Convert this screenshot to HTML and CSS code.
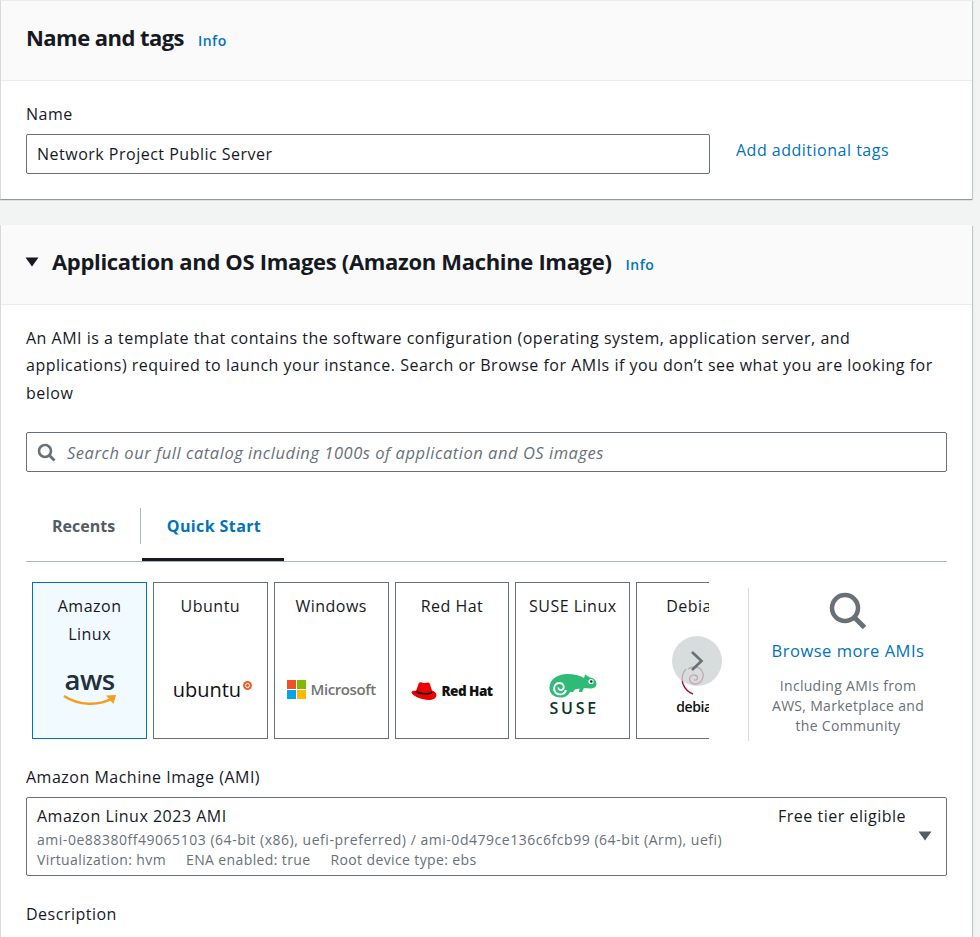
FILE: index.html
```html
<!DOCTYPE html>
<html lang="en">

<head>
    <meta charset="UTF-8">
    <meta name="viewport" content="width=device-width, initial-scale=1.0">
    <title>Launch an instance</title>
    <link rel="stylesheet" href="styles.css">
</head>

<body>
    <section class="card card-name">
        <header class="card-head">
            <h2>Name and tags</h2>
            <a class="info">Info</a>
        </header>
        <div class="card-body name-body">
            <div class="name-field">
                <label class="field-label">Name</label>
                <div class="input-box">Network Project Public Server</div>
            </div>
            <a class="add-tags">Add additional tags</a>
        </div>
    </section>

    <section class="card card-ami">
        <header class="card-head">
            <svg class="caret" width="14" height="10" viewBox="0 0 14 10">
                <path d="M0.5 0.5h13L7 9.5z" fill="#16191f" />
            </svg>
            <h2>Application and OS Images (Amazon Machine Image)</h2>
            <a class="info">Info</a>
        </header>
        <div class="card-body ami-body">
            <p class="intro">An AMI is a template that contains the software configuration (operating system, application server, and applications) required to launch your instance. Search or Browse for AMIs if you don’t see what you are looking for below</p>

            <div class="input-box search-box">
                <svg width="19" height="19" viewBox="0 0 19 19">
                    <circle cx="8" cy="8" r="6" fill="none" stroke="#687078" stroke-width="2.6" />
                    <path d="M12.5 12.5L17.5 17.5" stroke="#687078" stroke-width="2.8" />
                </svg>
                <span>Search our full catalog including 1000s of application and OS images</span>
            </div>

            <div class="tabs">
                <div class="tab">Recents</div>
                <div class="tab tab-active">Quick Start</div>
            </div>

            <div class="picker">
                <div class="tiles-wrap">
                    <div class="tiles">
                        <div class="tile tile-on">
                            <div class="tile-name">Amazon Linux</div>
                            <div class="logo logo-aws">
                                <span>aws</span>
                                <svg width="54" height="13" viewBox="0 0 54 13">
                                    <path d="M1 2C16 12 36 12 50 4" fill="none" stroke="#f79c1c" stroke-width="2.4" />
                                    <path d="M43 1.5L53 1L50.5 10z" fill="#f79c1c" />
                                </svg>
                            </div>
                        </div>
                        <div class="tile">
                            <div class="tile-name">Ubuntu</div>
                            <div class="logo logo-ubuntu">
                                <span>ubuntu</span>
                                <svg width="9" height="9" viewBox="0 0 9 9">
                                    <circle cx="4.5" cy="4.5" r="4.5" fill="#e9642f" />
                                    <circle cx="4.5" cy="4.5" r="2" fill="none" stroke="#fff" stroke-width="1" />
                                </svg>
                            </div>
                        </div>
                        <div class="tile">
                            <div class="tile-name">Windows</div>
                            <div class="logo logo-ms">
                                <div class="ms-grid">
                                    <i class="ms-red"></i><i class="ms-green"></i><i class="ms-blue"></i><i class="ms-yellow"></i>
                                </div>
                                <span>Microsoft</span>
                            </div>
                        </div>
                        <div class="tile">
                            <div class="tile-name">Red Hat</div>
                            <div class="logo logo-redhat">
                                <svg width="26" height="20" viewBox="0 0 26 20">
                                    <path d="M5 10L7.500 3C8 1 10 1 12 1.800C14 2.500 16 1.500 17 1.500C18.500 1.500 19 3 19.500 5L21 9.500C23.500 10.500 25.500 12 25.500 14C25.500 17 22 19 17.500 19C11 19 1 14.500 0.500 11.500C0.300 10 2.500 9.500 5 10Z" fill="#ee0000" />
                                    <path d="M5 9.500C9 12 16 13.200 21 10.500L21.500 12C16 15 9 14 4.500 11Z" fill="#111" />
                                </svg>
                                <span>Red Hat</span>
                            </div>
                        </div>
                        <div class="tile">
                            <div class="tile-name">SUSE Linux</div>
                            <div class="logo logo-suse">
                                <svg width="48" height="25" viewBox="0 0 48 25">
                                    <path d="M0.500 14C1 6 9 1 18 1C25 1 31 2.500 35 5L36 1.500L41 4.500C45 5 47.500 7.500 47.500 11C47.500 14 45 15.500 41 15.500L35 15L33 19H30L30.500 15.500L26 16.500L24 19H21C19.500 22.500 16 24.500 11.500 24.500C4.500 24.500 0 20 0.500 14Z" fill="#30ba78" />
                                    <path d="M17 17C16 21.500 10 23 6.500 19.500C3.500 16 5.500 10 10.500 10C14.500 10 16 14.500 13.500 16.500C11.500 18 9 16.500 9.500 14.500" fill="none" stroke="#fff" stroke-width="1.800" />
                                    <circle cx="42" cy="8.500" r="2.600" fill="#fff" />
                                    <circle cx="42.300" cy="8.500" r="1.300" fill="#0c322c" />
                                </svg>
                                <span>SUSE</span>
                            </div>
                        </div>
                        <div class="tile">
                            <div class="tile-name tile-name-cut">Debian</div>
                            <div class="logo logo-debian">
                                <svg width="24" height="29" viewBox="0 0 24 29">
                                    <path d="M7 3C11 0 18 0 21 5C24 10 21 17 15 18C10 18.500 7 14 9.500 10.500C11.500 8 16 8.500 16.500 11.500C16.800 13.500 14.500 15 13 13.500M5 3C1.500 7 0.500 13 2 18C4 23 8 26.500 12 28" fill="none" stroke="#a80030" stroke-width="1.400" />
                                </svg>
                                <span>debian</span>
                            </div>
                        </div>
                    </div>
                    <div class="next-btn">
                        <svg width="14" height="22" viewBox="0 0 14 22">
                            <path d="M2 2L11.500 11L2 20" fill="none" stroke="#687078" stroke-width="2.600" />
                        </svg>
                    </div>
                </div>
                <div class="browse">
                    <svg width="38" height="38" viewBox="0 0 38 38">
                        <circle cx="16" cy="16" r="13" fill="none" stroke="#687078" stroke-width="4.500" />
                        <path d="M25.500 25.500L35.500 35.500" stroke="#687078" stroke-width="5" />
                    </svg>
                    <a class="browse-link">Browse more AMIs</a>
                    <p class="browse-note">Including AMIs from AWS, Marketplace and the Community</p>
                </div>
            </div>

            <label class="field-label ami-label">Amazon Machine Image (AMI)</label>
            <div class="select-box">
                <div class="select-top">
                    <span>Amazon Linux 2023 AMI</span>
                    <span class="free-tier">Free tier eligible</span>
                </div>
                <div class="select-sub">ami-0e88380ff49065103 (64-bit (x86), uefi-preferred) / ami-0d479ce136c6fcb99 (64-bit (Arm), uefi)</div>
                <div class="select-sub select-meta">
                    <span>Virtualization: hvm</span>
                    <span>ENA enabled: true</span>
                    <span>Root device type: ebs</span>
                </div>
                <svg class="select-caret" width="14" height="10" viewBox="0 0 14 10">
                    <path d="M0.500 0.500h13L7 9.500z" fill="#545b64" />
                </svg>
            </div>

            <label class="field-label desc-label">Description</label>
        </div>
    </section>
</body>

</html>
```
FILE: styles.css
```css
* {
    margin: 0;
    padding: 0;
    box-sizing: border-box;
}

html,
body {
    height: 937px;
    overflow: hidden;
}

body {
    background-color: #f2f3f3;
    padding-right: 8px;
    font-family: "Open Sans", "Liberation Sans", sans-serif;
    font-size: 16px;
    letter-spacing: 0.5px;
    color: #16191f;
}

a {
    color: #0073bb;
}

svg {
    flex: none;
}

.card {
    background-color: #fff;
    border-left: 1px solid #d5dbdb;
    box-shadow: 0 1px 1px 0 rgba(0, 28, 36, 0.3), 1px 1px 1px 0 rgba(0, 28, 36, 0.15);
}

.card-name {
    height: 199px;
    border-top: 1px solid #eaeded;
}

.card-ami {
    margin-top: 26px;
    height: 720px;
}

.card-head {
    display: flex;
    align-items: center;
    height: 80px;
    padding: 0 25px 8px;
    background-color: #fafafa;
    border-bottom: 1px solid #eaeded;
}

.card-head h2 {
    font-size: 22px;
    font-weight: 700;
    letter-spacing: -0.32px;
}

.card-name h2 {
    letter-spacing: -0.55px;
}

.info {
    margin-left: 14px;
    margin-top: 8px;
    font-size: 14px;
    font-weight: 600;
}

.caret {
    margin: 2px 13px 0 -1px;
}

.name-body {
    display: flex;
    padding: 21px 25px 0 25px;
}

.name-field {
    width: 684px;
}

.field-label {
    display: block;
    line-height: 24px;
}

.input-box {
    display: flex;
    align-items: center;
    height: 40px;
    margin-top: 8px;
    padding: 0 10px;
    border: 1px solid #687078;
    border-radius: 2px;
    background-color: #fff;
}

.add-tags {
    margin: 37px 0 0 26px;
}

.ami-body {
    padding: 20px 25px 0 25px;
}

.intro {
    height: 83px;
    line-height: 27.400px;
}

.search-box {
    margin-top: 24px;
    gap: 11px;
    font-size: 16.500px;
    letter-spacing: 0.53px;
    font-style: italic;
    color: #687078;
}

.tabs {
    display: flex;
    height: 90px;
    padding-top: 36px;
    border-bottom: 1px solid #aab7b8;
    font-weight: 700;
    letter-spacing: 0;
}

.tab {
    height: 53px;
    line-height: 36px;
    padding: 0 25px 0 26px;
    color: #545b64;
    position: relative;
}

.tab:first-child {
    width: 115px;
    border-right: 0;
}

.tab:first-child::after {
    content: "";
    position: absolute;
    right: 0;
    top: 0;
    height: 36px;
    border-right: 1px solid #aab7b8;
}

.tab-active {
    width: 142px;
    margin-left: 1px;
    text-align: center;
    padding: 0 0 0 2px;
    color: #0073bb;
    letter-spacing: 0.4px;
    border-bottom: 3px solid #16191f;
}

.picker {
    display: flex;
    margin-top: 20px;
    margin-left: 6px;
}

.tiles-wrap {
    position: relative;
    width: 677px;
    height: 157px;
}

.tiles {
    display: flex;
    gap: 6px;
    width: 100%;
    height: 100%;
    padding-left: 0.2px;
    overflow: hidden;
}

.tile {
    display: flex;
    flex-direction: column;
    flex: none;
    width: 114.800px;
    height: 157px;
    border: 1px solid #687078;
    padding-top: 9px;
    text-align: center;
    line-height: 28px;
}

.tile-on {
    background-color: #f1faff;
    border-color: #0073bb;
}

.tile-name {
    height: 56px;
    padding: 0 8px;
}

.tile-name-cut {
    padding: 0 0 0 29px;
    text-align: left;
    white-space: nowrap;
}

.logo {
    display: flex;
    align-items: center;
    justify-content: center;
    height: 60px;
    margin-top: 4px;
    padding-top: 14px;
}

.logo-aws {
    flex-direction: column;
    padding-top: 10px;
    line-height: 1;
}

.logo-aws span {
    font-size: 27.500px;
    font-weight: 600;
    letter-spacing: -0.5px;
    line-height: 24px;
    color: #232f3e;
    margin-top: 1px;
}

.logo-aws svg {
    margin-top: 2px;
}

.logo-ubuntu {
    gap: 2px;
    padding: 16px 0 0 4px;
}

.logo-ubuntu span {
    font-size: 20px;
    letter-spacing: 0;
    line-height: 24px;
    color: #111;
}

.logo-ubuntu svg {
    margin-top: -10px;
}

.logo-ms {
    gap: 5px;
}

.ms-grid {
    display: grid;
    grid-template-columns: 9px 9px;
    grid-template-rows: 9px 9px;
    gap: 1px;
}

.ms-red {
    background-color: #f25022;
}

.ms-green {
    background-color: #7fba00;
}

.ms-blue {
    background-color: #00a4ef;
}

.ms-yellow {
    background-color: #ffb900;
}

.logo-ms span {
    font-size: 15px;
    font-weight: 600;
    letter-spacing: -0.4px;
    color: #737373;
}

.logo-redhat {
    gap: 4px;
    padding-top: 18px;
}

.logo-redhat span {
    font-size: 13.500px;
    font-weight: 800;
    letter-spacing: -0.5px;
    color: #111;
}

.logo-suse {
    flex-direction: column;
    justify-content: flex-start;
    height: 80px;
    padding-top: 21px;
    gap: 2px;
}

.logo-suse span {
    font-size: 16px;
    line-height: 16px;
    letter-spacing: 2.800px;
    font-weight: 600;
    color: #0c322c;
    margin-right: -3px;
}

.logo-debian {
    flex-direction: column;
    align-items: flex-start;
    justify-content: flex-start;
    height: 80px;
    padding: 14px 0 0 39px;
    line-height: 15px;
}

.logo-debian svg {
    margin: 0 0 4px 5px;
}

.logo-debian span {
    font-size: 14px;
    font-weight: 600;
    letter-spacing: -0.4px;
    color: #111;
}

.next-btn {
    position: absolute;
    left: 640px;
    top: 54px;
    width: 50px;
    height: 50px;
    display: flex;
    align-items: center;
    justify-content: center;
    border-radius: 50%;
    background-color: rgba(205, 212, 212, 0.8);
}

.browse {
    display: flex;
    flex-direction: column;
    align-items: center;
    width: 199px;
    height: 153px;
    margin: 6px 0 0 39px;
    padding: 4px 20px 0;
    border-left: 1px solid #d5dbdb;
    text-align: center;
}

.browse-link {
    margin-top: 9px;
    white-space: nowrap;
    line-height: 24px;
    font-size: 16.500px;
}

.browse-note {
    margin-top: 13px;
    font-size: 14px;
    letter-spacing: 0.3px;
    line-height: 20px;
    color: #687078;
}

.ami-label {
    margin-top: 24px;
}

.select-box {
    position: relative;
    height: 79px;
    margin-top: 8px;
    padding: 7px 10px 0;
    border: 1px solid #687078;
    border-radius: 2px;
}

.select-top {
    display: flex;
    justify-content: space-between;
    margin-bottom: 2px;
    padding-right: 30px;
    line-height: 23px;
}

.select-sub {
    font-size: 14px;
    letter-spacing: 0.53px;
    line-height: 20px;
    color: #687078;
}

.select-meta {
    display: flex;
    gap: 20px;
    letter-spacing: 0.38px;
}

.select-caret {
    position: absolute;
    right: 14px;
    top: 33px;
}

.desc-label {
    margin-top: 26px;
}
```
